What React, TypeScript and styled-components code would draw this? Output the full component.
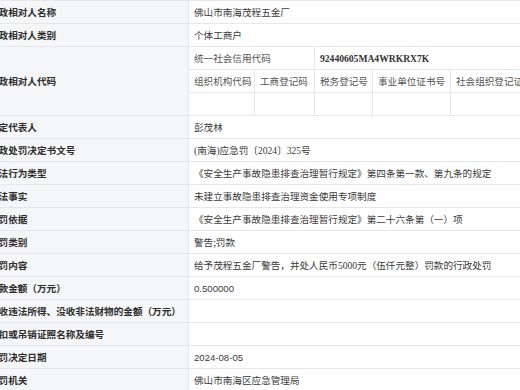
import React from "react";
import styled, { createGlobalStyle } from "styled-components";

const Global = createGlobalStyle`
  html, body { margin: 0; padding: 0; background: #fff; overflow: hidden; }
  body { font-family: "Noto Sans CJK SC", "Noto Sans", sans-serif; }
`;

const Table = styled.div`
  margin-left: -16px;
  width: 560px;
  border-top: 1px solid #e6e7eb;
  font-size: 9.6px;
  color: #333;
`;

const Row = styled.div`
  display: grid;
  grid-template-columns: 205px 1fr;
  border-bottom: 1px solid #e6e7eb;
`;

const Label = styled.div`
  background: #f5f6f8;
  border-right: 1px solid #e6e7eb;
  font-weight: 700;
  color: #2c2c2c;
  padding: 0 5px;
  min-height: 22px;
  display: flex;
  align-items: center;
  white-space: nowrap;
`;

const Value = styled.div<{ $latin?: "serif" | "sans" }>`
  padding: 0 5px;
  min-height: 22px;
  display: flex;
  align-items: center;
  white-space: nowrap;
  color: #3a3a3a;
  font-family: ${(p) =>
    p.$latin === "serif"
      ? `"Liberation Serif", "Noto Sans CJK SC", serif`
      : p.$latin === "sans"
      ? `"Liberation Sans", "Noto Sans CJK SC", sans-serif`
      : `"Noto Sans CJK SC", sans-serif`};
`;

const SubTable = styled.div`
  display: grid;
  grid-template-columns: 66px 60px 58px 78px 93px;
  grid-auto-rows: 22px;
  row-gap: 1px;
  background: #e6e7eb;
`;

const SubCell = styled.div<{ $span?: number; $muted?: boolean; $serif?: boolean; $last?: boolean }>`
  grid-column: span ${(p) => p.$span ?? 1};
  background: #fff;
  margin-right: ${(p) => (p.$last ? 0 : 1)}px;
  padding: 0 5px;
  display: flex;
  align-items: center;
  white-space: nowrap;
  color: ${(p) => (p.$muted ? "#555" : "#333")};
  font-family: ${(p) =>
    p.$serif ? `"Liberation Serif", "Noto Sans CJK SC", serif` : `"Noto Sans CJK SC", sans-serif`};
  font-weight: ${(p) => (p.$serif ? 700 : 400)};
`;

type Item = { label: string; value: string; latin?: "serif" | "sans" };

const before: Item[] = [
  { label: "行政相对人名称", value: "佛山市南海茂程五金厂" },
  { label: "行政相对人类别", value: "个体工商户" },
];

const after: Item[] = [
  { label: "法定代表人", value: "彭茂林" },
  { label: "行政处罚决定书文号", value: "(南海)应急罚〔2024〕325号", latin: "serif" },
  { label: "违法行为类型", value: "《安全生产事故隐患排查治理暂行规定》第四条第一款、第九条的规定" },
  { label: "违法事实", value: "未建立事故隐患排查治理资金使用专项制度" },
  { label: "处罚依据", value: "《安全生产事故隐患排查治理暂行规定》第二十六条第（一）项" },
  { label: "处罚类别", value: "警告;罚款" },
  { label: "处罚内容", value: "给予茂程五金厂警告，并处人民币5000元（伍仟元整）罚款的行政处罚", latin: "serif" },
  { label: "罚款金额（万元）", value: "0.500000", latin: "sans" },
  { label: "没收违法所得、没收非法财物的金额（万元）", value: "" },
  { label: "暂扣或吊销证照名称及编号", value: "" },
  { label: "处罚决定日期", value: "2024-08-05", latin: "sans" },
  { label: "处罚机关", value: "佛山市南海区应急管理局" },
];

const codeHeaders = ["组织机构代码", "工商登记码", "税务登记号", "事业单位证书号", "社会组织登记证号"];

export default function App() {
  return (
    <>
      <Global />
      <Table>
        {before.map((it) => (
          <Row key={it.label}>
            <Label>{it.label}</Label>
            <Value $latin={it.latin}>{it.value}</Value>
          </Row>
        ))}
        <Row>
          <Label>行政相对人代码</Label>
          <SubTable>
            <SubCell $span={2} $muted>
              统一社会信用代码
            </SubCell>
            <SubCell $span={3} $serif $last>
              92440605MA4WRKRX7K
            </SubCell>
            {codeHeaders.map((h, i) => (
              <SubCell key={h} $muted $last={i === codeHeaders.length - 1}>
                {h}
              </SubCell>
            ))}
            {codeHeaders.map((h, i) => (
              <SubCell key={"e" + h} $last={i === codeHeaders.length - 1} />
            ))}
          </SubTable>
        </Row>
        {after.map((it) => (
          <Row key={it.label}>
            <Label>{it.label}</Label>
            <Value $latin={it.latin}>{it.value}</Value>
          </Row>
        ))}
      </Table>
    </>
  );
}
